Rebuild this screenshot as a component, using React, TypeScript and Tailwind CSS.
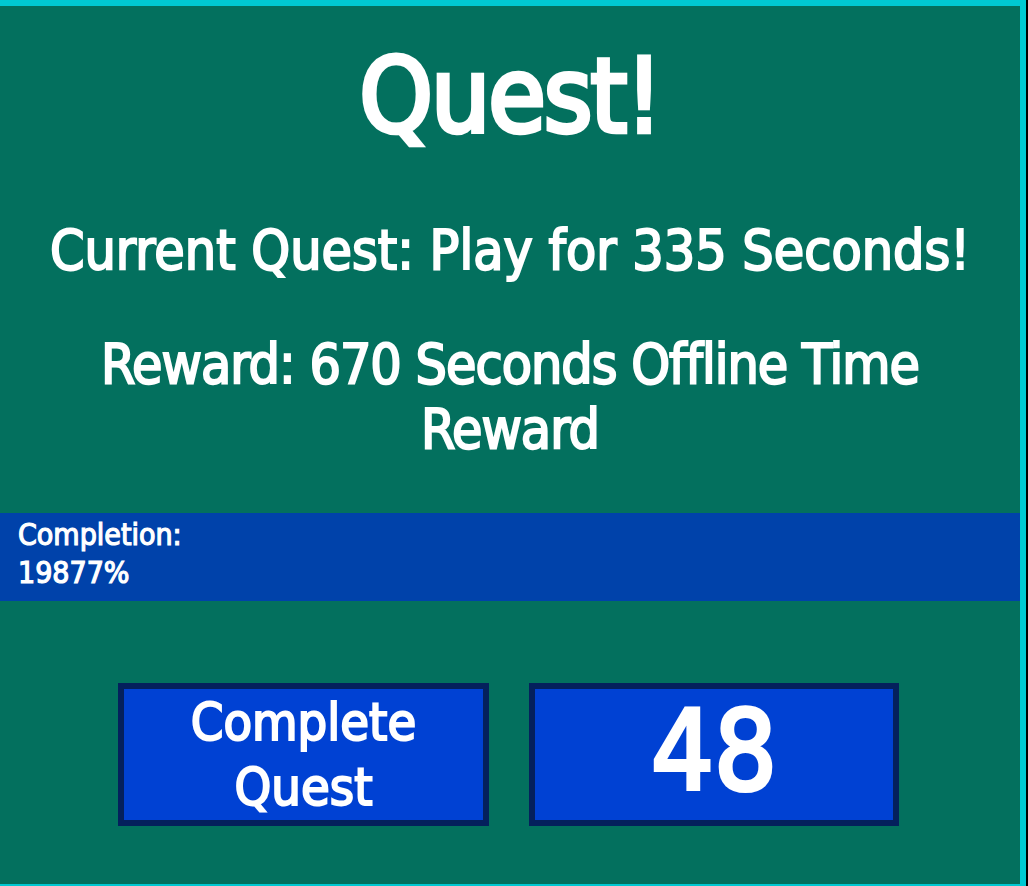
const font = "font-['DejaVu_Sans_Condensed','Roboto',sans-serif]";

export default function App() {
  return (
    <div className="h-[886px] w-[1028px] overflow-hidden bg-black">
      <div
        className={`flex h-[886px] w-[1026px] flex-col border-t-[6px] border-r-[6px] border-b-[2px] border-[#00c9d3] bg-[#03705e] text-white ${font}`}
      >
        <h1 className="mt-[34px] text-center text-[104px] leading-[112px] tracking-[-2px] [-webkit-text-stroke:4.5px_white]">
          Quest!
        </h1>
        <p className="mt-[66px] text-center text-[55px] leading-[64px] whitespace-nowrap [-webkit-text-stroke:2px_white]">
          Current Quest: Play for 335 Seconds!
        </p>
        <p className="mt-[50px] text-center text-[55px] leading-[65px] tracking-[-1px] [-webkit-text-stroke:2px_white]">
          Reward: 670 Seconds Offline Time
          <br />
          Reward
        </p>
        <div className="mt-[51px] h-[88px] bg-[#0042aa] px-[18px] pt-[3px] text-[30px] leading-[38px] [-webkit-text-stroke:1.2px_white]">
          <div>Completion:</div>
          <div>19877%</div>
        </div>
        <div className="mt-[82px] flex gap-[40px] pl-[118px]">
          <button className="flex h-[143px] w-[371px] flex-col items-center justify-center border-[6px] border-[#04205c] bg-[#0041d3] text-[52px] leading-[65px] [-webkit-text-stroke:2px_white]">
            <span>Complete</span>
            <span>Quest</span>
          </button>
          <button className="flex h-[143px] w-[370px] items-center justify-center border-[6px] border-[#04205c] bg-[#0041d3] pb-[8px] text-[110px] leading-none [-webkit-text-stroke:4px_white]">
            48
          </button>
        </div>
      </div>
    </div>
  );
}
